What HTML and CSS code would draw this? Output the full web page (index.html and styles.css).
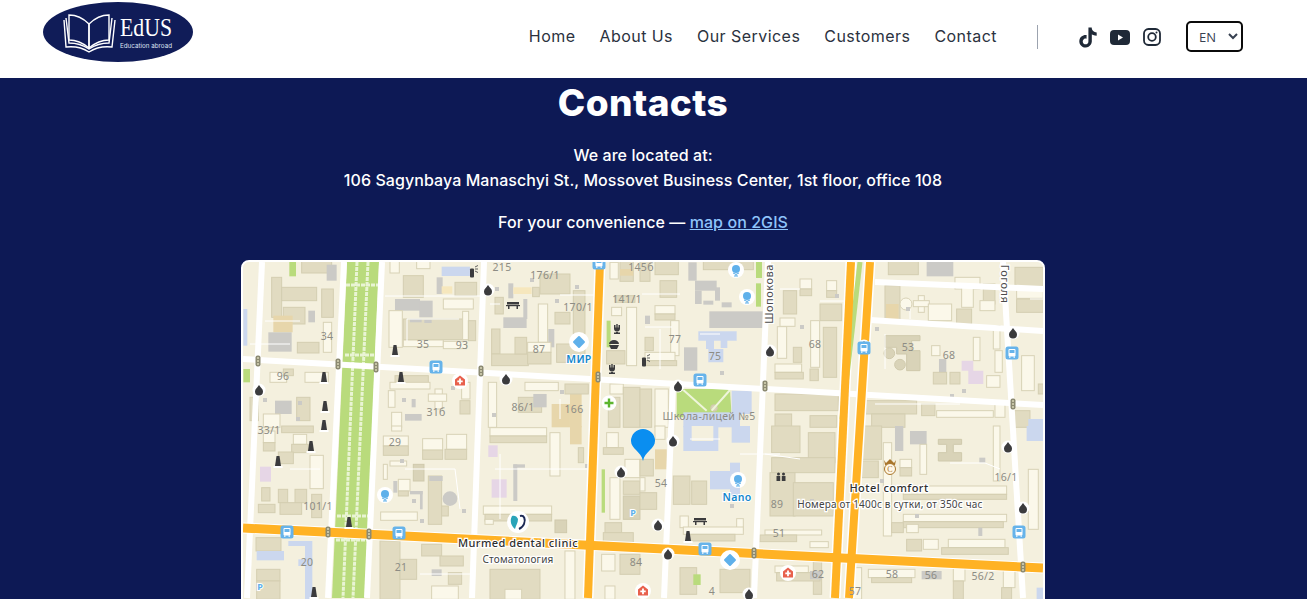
FILE: index.html
```html
<!DOCTYPE html>
<html lang="en">
<head>
<meta charset="utf-8">
<title>EdUS — Contacts</title>
<link rel="stylesheet" href="styles.css">
</head>
<body>
<header class="site-header">
  <a class="logo" href="#" aria-label="EdUS">
    <svg width="150" height="60" viewBox="0 0 150 60">
      <ellipse cx="75" cy="30" rx="75" ry="30" class="logo-bg"/>
      <g class="logo-book">
        <path d="M26 13 C33 13 40 16 46 22 L46 46 C40 41 33 38 26 38 Z"/>
        <path d="M66 13 C59 13 52 16 46 22 L46 46 C52 41 59 38 66 38 Z"/>
        <path d="M23 16 L26 41 C33 41 40 43 46 47 C52 43 59 41 66 41 L69 16"/>
        <path d="M21 18 L23 45 C32 44 40 46 46 50 C52 46 60 44 69 45 L72 18"/>
      </g>
      <text x="77" y="34" class="logo-name" textLength="52" lengthAdjust="spacingAndGlyphs">EdUS</text>
      <text x="77" y="46" class="logo-sub" textLength="52" lengthAdjust="spacingAndGlyphs">Education abroad</text>
    </svg>
  </a>
  <nav class="nav">
    <a href="#">Home</a>
    <a href="#">About Us</a>
    <a href="#">Our Services</a>
    <a href="#">Customers</a>
    <a href="#">Contact</a>
  </nav>
  <span class="divider"></span>
  <div class="socials">
    <svg class="ico-tt" width="20" height="21" viewBox="0 0 24 24"><path class="ico-fill" d="M12.525.02c1.31-.02 2.61-.01 3.91-.02.08 1.53.63 3.09 1.75 4.17 1.12 1.11 2.7 1.62 4.24 1.79v4.03c-1.44-.05-2.89-.35-4.2-.97-.57-.26-1.1-.59-1.62-.93-.01 2.92.01 5.84-.02 8.75-.08 1.4-.54 2.79-1.35 3.94-1.31 1.92-3.58 3.17-5.91 3.21-1.43.08-2.86-.31-4.08-1.03-2.02-1.19-3.44-3.37-3.65-5.71-.02-.5-.03-1-.01-1.49.18-1.9 1.12-3.72 2.58-4.96 1.66-1.44 3.98-2.13 6.15-1.72.02 1.48-.04 2.96-.04 4.44-.99-.32-2.15-.23-3.02.37-.63.41-1.11 1.04-1.36 1.75-.21.51-.15 1.07-.14 1.61.24 1.64 1.82 3.02 3.5 2.87 1.12-.01 2.19-.66 2.77-1.61.19-.33.4-.67.41-1.06.1-1.79.06-3.57.07-5.36.01-4.03-.01-8.05.02-12.07z"/></svg>
    <svg width="20" height="15" viewBox="0 0 20 15"><rect width="20" height="15" rx="4" class="ico-fill"/><path d="M8 4.6 L13 7.5 L8 10.4 Z" class="ico-white"/></svg>
    <svg class="ico-ig" width="18" height="18" viewBox="0 0 18 18"><rect x="1" y="1" width="16" height="16" rx="4.5" class="ico-line"/><circle cx="9" cy="9" r="3.8" class="ico-line"/><circle cx="13.5" cy="4.5" r="1" class="ico-fill"/></svg>
  </div>
  <select class="lang" aria-label="Language">
    <option>EN</option>
    <option>RU</option>
    <option>KG</option>
  </select>
</header>

<main class="contacts">
  <h1 class="title">Contacts</h1>
  <p class="address">We are located at:<br>106 Sagynbaya Manaschyi St., Mossovet Business Center, 1st floor, office 108</p>
  <p class="convenience">For your convenience — <a href="#">map on 2GIS</a></p>
  <div class="map">
    <svg class="map-svg" width="800" height="450" viewBox="243 263 800 450">
      <defs>
        <g id="drop"><circle r="6.500" class="m-white"/><path d="M0-5 C2-2 4-1 4 1.500 A4 4 0 0 1-4 1.500 C-4-1-2-2 0-5Z" class="m-dark"/></g>
        <g id="mon"><path d="M-1.500-6 H1.500 L3 4 H-3Z" class="m-dark"/><rect x="-4.500" y="4" width="9" height="2" class="m-white"/></g>
        <g id="bus"><rect x="-6.500" y="-6.500" width="13" height="13" rx="2.500" class="m-blue"/><rect x="-3.500" y="-4" width="7" height="7.500" rx="1" class="m-white"/><rect x="-2.500" y="-3" width="5" height="3" class="m-blue"/><rect x="-3" y="3.500" width="1.500" height="1.200" class="m-white"/><rect x="1.500" y="3.500" width="1.500" height="1.200" class="m-white"/></g>
        <g id="tl"><rect x="-2.500" y="-5.500" width="5" height="11" rx="2" class="m-tl"/><circle cy="-3" r="1" class="m-tl-dot"/><circle r="1" class="m-tl-dot"/><circle cy="3" r="1" class="m-tl-dot"/></g>
        <g id="globe"><circle r="8" class="m-white"/><circle cy="-1" r="4" class="m-lblue"/><path d="M-3 3 A4.500 4.500 0 0 0 3 3 M0 4 V6 M-2 6 H2" class="m-lblue-line"/></g>
        <g id="dia"><circle r="10" class="m-white"/><rect x="-4.500" y="-4.500" width="9" height="9" rx="1" transform="rotate(45)" class="m-lblue"/></g>
        <g id="hosp"><circle r="8" class="m-white"/><path d="M0-5.500 L5 -1.500 V4.500 H-5 V-1.500Z" class="m-red"/><path d="M-.9-2.500 H.9 V-.5 H2.700 V1.300 H.9 V3.200 H-.9 V1.300 H-2.700 V-.5 H-.9Z" class="m-white"/></g>
        <g id="fork"><path d="M-3-4 V-.5 A3 3 0 0 0 3-.5 V-4 H1.500 V-1.500 H.7 V-5 H-.7 V-1.500 H-1.500 V-4Z M-1 2 H1 V3.500 H3 V5 H-3 V3.500 H-1Z" class="m-dark"/></g>
        <g id="bench"><rect x="-6" y="-3" width="12" height="2.500" class="m-dark"/><rect x="-7" y="0" width="14" height="1.200" class="m-dark"/><rect x="-5" y="1" width="1.500" height="3" class="m-dark"/><rect x="3.500" y="1" width="1.500" height="3" class="m-dark"/></g>
        <g id="gas"><rect x="-2" y="-3.500" width="4" height="9" rx="1" class="m-dark"/><path d="M3-5 L6-6.500 M3-3 H6 M3-1 L6 .5" class="m-thin"/></g>
      </defs>

      <rect x="243" y="263" width="800" height="450" class="base"/>

      <!-- top-left -->
      <g transform="translate(240 255) scale(.3333)">
        <rect x="185" y="22" width="90" height="35" class="d"/><rect x="260" y="32" width="30" height="48" class="g"/><rect x="148" y="22" width="20" height="45" class="n"/>
        <rect x="95" y="70" width="30" height="120" class="d"/><rect x="125" y="100" width="105" height="40" class="d"/><rect x="130" y="160" width="65" height="50" class="d"/><rect x="205" y="170" width="20" height="35" class="g"/><rect x="100" y="185" width="58" height="50" class="o"/><rect x="85" y="235" width="70" height="58" class="g"/><rect x="172" y="265" width="65" height="32" class="d"/><rect x="245" y="105" width="35" height="85" class="d"/><rect x="250" y="205" width="25" height="90" class="l"/><rect x="10" y="165" width="12" height="110" class="u"/>
        <rect x="450" y="22" width="28" height="35" class="l"/><rect x="530" y="22" width="40" height="22" class="l"/><rect x="490" y="65" width="60" height="65" class="d"/><rect x="605" y="38" width="85" height="28" class="u"/><rect x="590" y="70" width="18" height="50" class="g"/><rect x="605" y="97" width="32" height="22" class="o2"/><rect x="645" y="85" width="65" height="40" class="d"/>
        <rect x="465" y="135" width="75" height="35" class="g"/><rect x="538" y="140" width="40" height="50" class="g"/><rect x="610" y="135" width="90" height="30" class="l"/><rect x="490" y="195" width="190" height="62" class="d"/><rect x="447" y="170" width="40" height="110" class="l"/><rect x="490" y="258" width="120" height="20" class="l"/><rect x="610" y="262" width="70" height="22" class="l"/><rect x="668" y="172" width="18" height="85" class="l"/><rect x="685" y="200" width="22" height="60" class="d"/><rect x="510" y="195" width="35" height="10" class="g"/><rect x="553" y="197" width="22" height="10" class="g"/>
        <rect x="765" y="130" width="25" height="50" class="d"/><rect x="805" y="88" width="15" height="45" class="g"/><rect x="820" y="100" width="55" height="20" class="o2"/><rect x="878" y="100" width="20" height="28" class="d"/><rect x="900" y="60" width="90" height="60" class="d"/><rect x="790" y="190" width="70" height="32" class="g"/><rect x="850" y="135" width="12" height="60" class="g"/><rect x="755" y="225" width="25" height="75" class="d"/><rect x="755" y="300" width="110" height="35" class="d"/><rect x="825" y="250" width="35" height="50" class="d"/><rect x="895" y="150" width="28" height="115" class="l"/><rect x="945" y="175" width="45" height="35" class="d"/><rect x="925" y="225" width="18" height="55" class="g"/><rect x="863" y="265" width="70" height="30" class="l"/><rect x="863" y="295" width="70" height="35" class="d"/><rect x="1000" y="110" width="35" height="130" class="d"/><rect x="950" y="270" width="85" height="55" class="d"/>
        <rect x="1115" y="160" width="30" height="25" class="l"/><rect x="1160" y="160" width="30" height="175" class="l"/><rect x="1100" y="200" width="12" height="80" class="n"/><rect x="1140" y="22" width="40" height="60" class="d"/><rect x="1140" y="45" width="40" height="20" class="o"/><rect x="1125" y="125" width="60" height="20" class="d"/><rect x="1110" y="25" width="25" height="50" class="l"/><rect x="1100" y="290" width="55" height="40" class="d"/>
        <rect x="10" y="345" width="20" height="40" class="n"/><rect x="90" y="355" width="50" height="30" class="l"/><rect x="130" y="345" width="30" height="20" class="d"/><rect x="195" y="355" width="70" height="30" class="l"/><rect x="105" y="440" width="50" height="40" class="g"/><rect x="70" y="480" width="50" height="40" class="l"/><rect x="170" y="430" width="40" height="70" class="d"/><rect x="30" y="430" width="25" height="70" class="d"/>
        <rect x="465" y="365" width="100" height="25" class="d"/><rect x="450" y="385" width="120" height="20" class="l"/><rect x="445" y="410" width="20" height="50" class="l"/><rect x="455" y="475" width="30" height="45" class="l"/><rect x="585" y="405" width="22" height="60" class="l"/><rect x="565" y="420" width="55" height="22" class="l"/><rect x="665" y="385" width="25" height="50" class="l"/><rect x="660" y="440" width="30" height="40" class="d"/><rect x="495" y="480" width="50" height="20" class="g"/><rect x="515" y="435" width="12" height="25" class="g"/>
        <rect x="745" y="385" width="25" height="135" class="l"/><rect x="855" y="385" width="100" height="25" class="l"/><rect x="835" y="430" width="70" height="45" class="d"/><rect x="880" y="420" width="40" height="40" class="g"/><rect x="935" y="450" width="55" height="70" class="o"/><rect x="990" y="405" width="35" height="115" class="o"/><rect x="975" y="390" width="70" height="30" class="d"/><rect x="1110" y="390" width="40" height="30" class="l"/><rect x="1150" y="400" width="50" height="120" class="d"/><rect x="1105" y="430" width="35" height="90" class="d"/>
      </g>

      <!-- top-right -->
      <g transform="translate(640 255) scale(.3333)">
        <rect x="0" y="22" width="30" height="60" class="d"/><rect x="45" y="22" width="70" height="40" class="d"/><rect x="60" y="80" width="50" height="50" class="d"/>
        <rect x="190" y="22" width="150" height="25" class="d"/><rect x="145" y="25" width="25" height="55" class="g"/><rect x="165" y="80" width="65" height="30" class="g"/><rect x="165" y="110" width="20" height="40" class="g"/><rect x="225" y="100" width="15" height="40" class="g"/><rect x="190" y="140" width="30" height="12" class="g"/><rect x="245" y="145" width="30" height="15" class="g"/><rect x="348" y="22" width="18" height="50" class="n"/><rect x="348" y="88" width="15" height="70" class="n"/>
        <rect x="45" y="155" width="60" height="25" class="l"/><rect x="45" y="180" width="60" height="18" class="d"/><rect x="92" y="200" width="25" height="105" class="l"/><rect x="15" y="185" width="15" height="25" class="g"/><rect x="208" y="172" width="160" height="50" class="g"/><rect x="15" y="250" width="25" height="40" class="d"/><rect x="15" y="295" width="90" height="25" class="l"/><rect x="15" y="320" width="95" height="15" class="d"/>
        <path d="M175 232 H290 V260 H262 V282 H242 V260 H222 V285 H250 V325 H205 V285 H198 V260 H175Z" class="u"/><rect x="132" y="280" width="40" height="70" class="g"/>
        <rect x="480" y="75" width="35" height="30" class="l"/><rect x="480" y="105" width="35" height="20" class="d"/><rect x="560" y="80" width="30" height="30" class="l"/><rect x="560" y="110" width="30" height="20" class="d"/><rect x="430" y="110" width="40" height="70" class="d"/><rect x="540" y="150" width="65" height="50" class="d"/><rect x="420" y="192" width="45" height="25" class="l"/><rect x="412" y="218" width="28" height="95" class="l"/><rect x="405" y="330" width="80" height="25" class="l"/><rect x="405" y="355" width="85" height="20" class="d"/><rect x="460" y="280" width="25" height="45" class="d"/><rect x="512" y="200" width="27" height="140" class="l"/><rect x="510" y="345" width="25" height="35" class="d"/><rect x="550" y="220" width="40" height="150" class="d"/>
        <rect x="745" y="22" width="90" height="40" class="d"/><rect x="860" y="22" width="80" height="45" class="g"/><rect x="735" y="95" width="45" height="110" class="d"/><rect x="738" y="150" width="38" height="45" class="o"/><circle cx="798" cy="150" r="18" class="l"/><rect x="835" y="125" width="18" height="50" class="l"/><rect x="820" y="140" width="48" height="18" class="l"/><rect x="865" y="150" width="70" height="50" class="l"/><rect x="945" y="70" width="75" height="35" class="l"/><rect x="965" y="100" width="35" height="60" class="l"/><rect x="950" y="165" width="45" height="45" class="d"/><rect x="1030" y="90" width="35" height="60" class="d"/><rect x="1020" y="140" width="45" height="30" class="l"/><rect x="1125" y="40" width="85" height="60" class="d"/><rect x="1130" y="105" width="80" height="28" class="l"/><rect x="1130" y="135" width="80" height="40" class="d"/>
        <path d="M735 245 H840 V260 H815 V290 H840 V350 H800 V300 H770 V280 H735Z" class="dk"/><circle cx="748" cy="298" r="16" class="dk"/><circle cx="780" cy="332" r="16" class="dk"/>
        <rect x="875" y="275" width="25" height="30" class="l"/><rect x="897" y="315" width="22" height="40" class="g"/><rect x="880" y="355" width="40" height="35" class="d"/><rect x="930" y="355" width="30" height="35" class="d"/><rect x="1000" y="250" width="20" height="70" class="l"/><rect x="1060" y="215" width="20" height="70" class="l"/><rect x="1065" y="290" width="22" height="65" class="l"/><rect x="1040" y="365" width="40" height="35" class="l"/><path d="M965 320 H1000 V350 H1030 V390 H985 V350 H965Z" class="p"/><rect x="1145" y="305" width="38" height="105" class="l"/><rect x="1195" y="390" width="15" height="30" class="d"/>
        <rect x="405" y="420" width="190" height="50" class="d"/><rect x="405" y="480" width="50" height="40" class="d"/><rect x="510" y="485" width="80" height="35" class="d"/><rect x="675" y="440" width="155" height="40" class="d"/><rect x="695" y="480" width="100" height="40" class="d"/><rect x="845" y="450" width="40" height="35" class="d"/><rect x="890" y="470" width="170" height="20" class="l"/><rect x="1065" y="450" width="30" height="40" class="l"/><rect x="1120" y="470" width="50" height="50" class="d"/><rect x="1165" y="495" width="45" height="25" class="u"/>
        <path d="M110 405 H270 L275 490 H110Z" class="n"/><circle cx="222" cy="462" r="10" class="dk"/><rect x="130" y="475" width="170" height="45" class="u"/><rect x="275" y="410" width="60" height="70" class="u"/>
        <path d="M130 408 L200 470 M270 408 L215 470" class="lane"/>
        <rect x="45" y="405" width="40" height="115" class="l"/><rect x="0" y="405" width="35" height="115" class="d"/>
      </g>

      <!-- bottom-left -->
      <g transform="translate(240 427) scale(.3333)">
        <rect x="125" y="0" width="95" height="20" class="d"/><rect x="70" y="15" width="35" height="35" class="l"/><rect x="70" y="50" width="35" height="25" class="d"/><rect x="160" y="25" width="40" height="30" class="l"/><rect x="155" y="55" width="50" height="25" class="d"/><rect x="210" y="88" width="40" height="100" class="l"/><rect x="60" y="122" width="33" height="45" class="p"/><rect x="65" y="185" width="25" height="40" class="d"/><rect x="115" y="190" width="28" height="40" class="d"/><rect x="165" y="190" width="35" height="40" class="d"/><rect x="120" y="230" width="65" height="35" class="d"/><rect x="215" y="205" width="30" height="70" class="d"/><rect x="55" y="235" width="50" height="25" class="d"/><rect x="115" y="78" width="45" height="35" class="d"/>
        <rect x="455" y="0" width="30" height="15" class="l"/><rect x="430" y="30" width="75" height="30" class="l"/><rect x="430" y="60" width="75" height="28" class="d"/><rect x="548" y="38" width="60" height="35" class="l"/><rect x="548" y="72" width="60" height="28" class="d"/><rect x="620" y="25" width="60" height="45" class="l"/><rect x="615" y="70" width="65" height="30" class="d"/>
        <rect x="750" y="5" width="170" height="25" class="l"/><rect x="750" y="30" width="170" height="20" class="d"/><rect x="745" y="58" width="28" height="35" class="p"/><rect x="930" y="20" width="30" height="130" class="l"/><rect x="1015" y="65" width="16" height="45" class="d"/><rect x="990" y="0" width="35" height="55" class="o"/>
        <rect x="820" y="115" width="12" height="110" class="g"/><rect x="820" y="115" width="35" height="10" class="g"/><rect x="755" y="160" width="45" height="55" class="p"/>
        <rect x="450" y="105" width="50" height="15" class="l"/><rect x="430" y="115" width="12" height="45" class="l"/><rect x="460" y="165" width="12" height="35" class="g"/><rect x="475" y="160" width="35" height="35" class="l"/><rect x="475" y="195" width="30" height="15" class="d"/><rect x="510" y="195" width="38" height="10" class="g"/><rect x="540" y="195" width="8" height="55" class="g"/><rect x="422" y="258" width="110" height="25" class="l"/><rect x="520" y="115" width="32" height="50" class="dk"/>
        <rect x="565" y="150" width="40" height="145" class="d"/><rect x="605" y="240" width="20" height="30" class="d"/><rect x="568" y="150" width="40" height="15" class="g"/><circle cx="630" cy="218" r="22" class="g"/>
        <rect x="730" y="240" width="205" height="25" class="l"/><rect x="735" y="265" width="200" height="20" class="d"/><rect x="735" y="280" width="25" height="15" class="l"/><rect x="945" y="282" width="35" height="38" class="dk"/>
        <rect x="48" y="335" width="75" height="40" class="d"/><rect x="50" y="375" width="82" height="28" class="u"/><rect x="145" y="345" width="70" height="15" class="u"/><rect x="195" y="345" width="22" height="175" class="u"/><rect x="175" y="400" width="40" height="20" class="u"/><rect x="50" y="430" width="70" height="35" class="d"/><rect x="50" y="465" width="70" height="55" class="d"/>
        <rect x="420" y="345" width="60" height="175" class="d"/><rect x="545" y="355" width="60" height="35" class="d"/><rect x="480" y="400" width="50" height="60" class="d"/><rect x="600" y="390" width="70" height="30" class="d"/><rect x="575" y="480" width="80" height="40" class="l"/><rect x="625" y="440" width="40" height="35" class="d"/><rect x="575" y="430" width="30" height="20" class="g"/><rect x="975" y="375" width="30" height="145" class="l"/><rect x="750" y="430" width="150" height="90" class="d"/><rect x="795" y="490" width="50" height="30" class="l"/>
        <rect x="1100" y="20" width="35" height="45" class="l"/><rect x="1090" y="65" width="60" height="20" class="d"/><rect x="1155" y="100" width="45" height="55" class="l"/><rect x="1110" y="155" width="30" height="125" class="l"/><rect x="1150" y="165" width="50" height="40" class="d"/><rect x="1085" y="130" width="10" height="130" class="n"/><rect x="1150" y="210" width="50" height="70" class="dk"/><rect x="1095" y="290" width="50" height="30" class="d"/><rect x="1090" y="320" width="90" height="30" class="d"/><rect x="1095" y="480" width="30" height="40" class="l"/><rect x="1140" y="385" width="60" height="60" class="d"/><rect x="1085" y="385" width="40" height="50" class="l"/>
      </g>

      <!-- bottom-right -->
      <g transform="translate(640 427) scale(.3333)">
        <rect x="130" y="0" width="105" height="75" class="u"/><rect x="155" y="0" width="65" height="45" class="base"/><rect x="275" y="0" width="55" height="50" class="u"/><rect x="45" y="0" width="30" height="40" class="l"/><rect x="45" y="70" width="35" height="60" class="o"/><rect x="0" y="155" width="15" height="40" class="l"/><rect x="0" y="100" width="40" height="50" class="d"/><rect x="0" y="200" width="50" height="50" class="d"/><rect x="100" y="150" width="50" height="85" class="d"/><rect x="155" y="165" width="45" height="70" class="d"/><rect x="210" y="135" width="60" height="55" class="u"/><rect x="270" y="110" width="30" height="100" class="u"/>
        <rect x="395" y="0" width="85" height="80" class="d"/><rect x="505" y="20" width="80" height="90" class="d"/><rect x="395" y="95" width="190" height="45" class="d"/><rect x="390" y="140" width="75" height="130" class="d"/><rect x="460" y="170" width="120" height="100" class="d"/>
        <rect x="660" y="0" width="65" height="100" class="d"/><rect x="655" y="105" width="60" height="50" class="d"/><rect x="765" y="0" width="25" height="75" class="g"/><rect x="810" y="15" width="50" height="40" class="g"/><rect x="840" y="55" width="20" height="90" class="l"/><rect x="730" y="50" width="25" height="280" class="l"/><rect x="780" y="100" width="35" height="25" class="l"/><rect x="780" y="125" width="35" height="25" class="d"/><path d="M895 40 H965 V55 H940 V80 H965 V105 H895 V80 H920 V55 H895Z" class="dk"/><rect x="1018" y="95" width="18" height="15" class="g"/><rect x="1060" y="0" width="20" height="165" class="l"/><rect x="1160" y="0" width="50" height="45" class="u"/><rect x="1165" y="130" width="30" height="180" class="l"/>
        <rect x="790" y="180" width="310" height="25" class="l"/><rect x="790" y="205" width="310" height="15" class="d"/><rect x="790" y="265" width="310" height="22" class="l"/><rect x="790" y="287" width="300" height="18" class="d"/><rect x="800" y="295" width="35" height="25" class="l"/><rect x="755" y="290" width="35" height="30" class="d"/><rect x="800" y="340" width="45" height="35" class="d"/><rect x="850" y="340" width="45" height="30" class="l"/><rect x="925" y="340" width="170" height="25" class="l"/><rect x="905" y="365" width="200" height="20" class="d"/><rect x="1015" y="305" width="12" height="25" class="g"/>
        <rect x="120" y="270" width="25" height="35" class="l"/><rect x="290" y="278" width="20" height="35" class="l"/><rect x="130" y="303" width="180" height="22" class="l"/><rect x="145" y="325" width="140" height="20" class="d"/><rect x="375" y="312" width="170" height="15" class="l"/><rect x="360" y="327" width="110" height="20" class="d"/><rect x="510" y="347" width="55" height="18" class="l"/>
        <rect x="120" y="425" width="50" height="80" class="d"/><rect x="160" y="445" width="22" height="32" class="n"/><rect x="240" y="430" width="90" height="70" class="d"/><rect x="520" y="405" width="25" height="100" class="d"/><rect x="405" y="420" width="100" height="20" class="l"/><rect x="410" y="440" width="130" height="25" class="d"/><rect x="510" y="435" width="35" height="25" class="g"/><rect x="635" y="425" width="30" height="95" class="l"/><rect x="685" y="430" width="140" height="25" class="l"/><rect x="695" y="455" width="120" height="15" class="d"/><rect x="845" y="435" width="60" height="25" class="g"/><rect x="940" y="425" width="35" height="40" class="l"/><rect x="940" y="465" width="30" height="55" class="d"/><rect x="1090" y="425" width="35" height="60" class="l"/><rect x="1085" y="485" width="30" height="35" class="d"/><rect x="1190" y="485" width="20" height="35" class="u"/>
      </g>

      <!-- footpaths and small details -->
      <path d="M265 322 H300 M250 345 H290 M385 297 H483 M407 320 H459 M407 320 V342 M490 305 H500 M600 296 H560 M642 295 H680 M645 328 H672 M700 335 H720 M780 290 H800 M820 302 H850 M885 335 V370 M740 455 H780 M690 440 H720 M765 455 L800 460 M950 464 H985 L1000 470 M405 470 H455 L460 510 M495 470 H590 M420 575 H470 M660 330 V370 M910 310 V320 M875 405 H960 M1030 300 H1043 M350 530 H330 M500 455 V520 M290 470 H320 M560 400 V420" class="footpath"/>
      <path d="M495 288h4v4h-4z M530 279h4v4h-4z M263 399h4v4h-4z M298 402h4v4h-4z M296 418h4v4h-4z M451 387h4v4h-4z M402 399h4v4h-4z M492 414h4v4h-4z M560 391h4v4h-4z M555 300h4v4h-4z M575 286h4v4h-4z M720 372h4v4h-4z M800 326h4v4h-4z M835 295h4v4h-4z M875 328h4v4h-4z M950 395h4v4h-4z M962 390h4v4h-4z M906 308h4v4h-4z M400 460h4v4h-4z M412 500h4v4h-4z M420 520h4v4h-4z M462 510h4v4h-4z M585 465h4v4h-4z M730 505h4v4h-4z M810 500h4v4h-4z M880 480h4v4h-4z M915 515h4v4h-4z" class="g"/>

      <!-- boulevard -->
      <path d="M347 263 H379 L365 599 H332Z" class="n"/>
      <path d="M357 263 L343 599 M368 263 L353 599 M346 286 H378 M345 356 H377 M337 517 H368 M336 541 H367" class="lattice"/>

      <!-- roads -->
      <g class="road">
        <path d="M262 263 L247 599"/><path d="M344 263 L328 599"/><path d="M382 263 L367 599"/><path d="M484 263 L472 599"/><path d="M768 263 L754 599"/><path d="M673 385 L664 599"/><path d="M1003 263 L1023 599"/>
        <path d="M243 360 L1043 406"/><path d="M875 283 L1043 290"/><path d="M870 321 L1043 332"/>
      </g>
      <g class="casing">
        <path d="M600 263 L588 599"/><path d="M243 529 L1043 569"/><path d="M851 263 L835 599"/><path d="M870 263 L849 599"/>
      </g>
      <path d="M860 263 L842 420" class="green-strip"/>
      <g class="main">
        <path d="M243 529 L1043 569" class="main-h"/><path d="M600 263 L588 599"/><path d="M851 263 L835 599"/><path d="M870 263 L849 599"/>
      </g>

      <!-- markers -->
      <use href="#drop" x="488" y="291"/><use href="#drop" x="506" y="380"/><use href="#drop" x="259" y="391"/><use href="#drop" x="770" y="352"/><use href="#drop" x="678" y="387"/><use href="#drop" x="1013" y="334"/><use href="#drop" x="621" y="473"/><use href="#drop" x="673" y="442"/><use href="#drop" x="1008" y="448"/><use href="#drop" x="1023" y="509"/><use href="#drop" x="658" y="526"/><use href="#drop" x="668" y="555"/><use href="#drop" x="749" y="595"/><use href="#drop" x="864" y="347"/>
      <use href="#mon" x="395" y="352"/><use href="#mon" x="324" y="379"/><use href="#mon" x="401" y="379"/><use href="#mon" x="325" y="408"/><use href="#mon" x="324" y="427"/><use href="#mon" x="311" y="448"/><use href="#mon" x="278" y="463"/><use href="#mon" x="349" y="524"/><use href="#mon" x="314" y="594"/><use href="#mon" x="688" y="538"/>
      <use href="#bus" x="436" y="368"/><use href="#bus" x="599" y="264"/><use href="#bus" x="864" y="349"/><use href="#bus" x="1012" y="354"/><use href="#bus" x="700" y="381"/><use href="#bus" x="287" y="533"/><use href="#bus" x="399" y="534"/><use href="#bus" x="1019" y="533"/><use href="#bus" x="705" y="550"/>
      <use href="#tl" x="258" y="362"/><use href="#tl" x="338" y="365"/><use href="#tl" x="376" y="368"/><use href="#tl" x="481" y="372"/><use href="#tl" x="598" y="378"/><use href="#tl" x="765" y="387"/><use href="#tl" x="1013" y="405"/><use href="#tl" x="328" y="533"/><use href="#tl" x="369" y="535"/><use href="#tl" x="754" y="554"/><use href="#tl" x="1023" y="568"/>
      <use href="#globe" x="736" y="271"/><use href="#globe" x="747" y="298"/><use href="#globe" x="385" y="496"/><use href="#globe" x="738" y="481"/>
      <use href="#dia" x="579" y="343"/><use href="#dia" x="730" y="561"/>
      <use href="#hosp" x="460" y="382"/><use href="#hosp" x="788" y="574"/><use href="#hosp" x="643" y="592"/>
      <use href="#fork" x="617" y="330"/><use href="#fork" x="612" y="370"/><use href="#bench" x="513" y="306"/><use href="#bench" x="700" y="522"/><use href="#gas" x="472" y="273"/><use href="#gas" x="644" y="362"/>

      <g transform="translate(614 346)"><path d="M-5 0 H5 L3 4 H-3Z M-5-1 A5 4 0 0 1 5-1Z" class="m-dark"/></g>
      <circle cx="609" cy="404" r="7.500" class="m-white"/><path d="M607.800 399.500 H610.200 V402.800 H613.500 V405.200 H610.200 V408.500 H607.800 V405.200 H604.500 V402.800 H607.800Z" class="m-green"/>
      <g transform="translate(781 478)"><circle cx="-2.500" cy="-3" r="1.500" class="m-dark"/><circle cx="2.500" cy="-3" r="1.500" class="m-dark"/><path d="M-4.500-1 H-.8 V4 H-4.500Z M.8-1 H4.500 V4 H.8Z" class="m-dark"/></g>
      <text x="260" y="591" class="poi-p">P</text><text x="633" y="517" class="poi-p">P</text>

      <!-- dental logo -->
      <circle cx="518" cy="523" r="11" class="m-white"/>
      <path d="M512 517 C509 522 512 528 515 530 C516 526 518 524 518 520 C517 517 514 516 512 517Z" class="dent-a"/>
      <path d="M520 517 C524 516 526 520 524 525 C523 528 521 529 519 530" class="dent-b"/>

      <!-- hotel -->
      <path d="M884 461 L886 464 L890 460 L894 464 L896 461 L895 466 H885Z" class="hotel-crown"/>
      <circle cx="890" cy="470" r="5.500" class="hotel-ring"/>
      <text x="890" y="473" class="hotel-c">C</text>

      <!-- pin -->
      <path d="M631 442 A12 12 0 0 1 655 442 C655 450 645 452 643 462 C641 452 631 450 631 442Z" class="pin"/>

      <!-- labels -->
      <g class="num">
        <text x="502" y="272">215</text><text x="545" y="280">176/1</text><text x="578" y="312">170/1</text><text x="627" y="304">141/1</text><text x="327" y="341">34</text><text x="423" y="349">35</text><text x="462" y="350">93</text><text x="539" y="354">87</text><text x="283" y="381">96</text><text x="523" y="412">86/1</text><text x="574" y="414">166</text><text x="436" y="417">31б</text><text x="269" y="435">33/1</text><text x="395" y="447">29</text><text x="318" y="511">101/1</text><text x="307" y="567">20</text><text x="401" y="572">21</text><text x="675" y="344">77</text><text x="715" y="361">75</text><text x="815" y="349">68</text><text x="908" y="352">53</text><text x="949" y="360">68</text><text x="641" y="272">145б</text><text x="661" y="488">54</text><text x="777" y="509">89</text><text x="1006" y="482">16/1</text><text x="779" y="538">51</text><text x="818" y="579">62</text><text x="892" y="579">58</text><text x="931" y="580">56</text><text x="983" y="581">56/2</text><text x="855" y="596">57</text><text x="636" y="567">84</text><text x="712" y="596">4</text>
        <text x="709" y="421">Школа-лицей №5</text>
      </g>
      <text transform="translate(773 295) rotate(-90)" class="street">Шопокова</text>
      <text transform="translate(1001 285) rotate(90)" class="street">Гоголя</text>
      <text x="579" y="364" class="brand">МИР</text>
      <text x="737" y="502" class="brand">Nano</text>
      <text x="518" y="548" class="poi">Murmed dental clinic</text>
      <text x="518" y="564" class="poi-sub">Стоматология</text>
      <text x="889" y="493" class="poi">Hotel comfort</text>
      <text x="890" y="509" class="poi-sub">Номера от 1400с в сутки, от 350с час</text>
    </svg>
  </div>
</main>
</body>
</html>
```

FILE: styles.css
```css
* { box-sizing: border-box; }
html, body { margin: 0; height: 100%; overflow: hidden; }
body { font-family: Inter, "Noto Sans", sans-serif; background: #0d1955; color: #fff; }
a { color: inherit; }

.site-header {
  height: 78px;
  background: #fff;
  display: flex;
  align-items: center;
  padding: 0 64px 0 43px;
}
.logo { display: block; height: 60px; margin-top: -14px; }
.logo-bg { fill: #101c58; }
.logo-book path { fill: none; stroke: #fff; stroke-width: 1.4; }
.logo-name { font: 26px "Liberation Serif", serif; fill: #fff; }
.logo-sub { font: 6.500px Inter, sans-serif; fill: #dfe3f2; }

.nav { display: flex; gap: 24px; margin-left: auto; margin-top: -6px; }
.nav a { color: #2b3240; text-decoration: none; font-size: 16px; letter-spacing: .45px; white-space: nowrap; }
.divider { width: 1px; height: 24px; background: #9ca3af; margin: -5px 0 0 40px; }
.socials { display: flex; align-items: center; gap: 12px; margin: -4px 0 0 40px; }
.ico-ig { margin-left: 1px; }
.ico-fill { fill: #1f2937; }
.ico-white { fill: #fff; }
.ico-line { fill: none; stroke: #1f2937; stroke-width: 1.800; }
.lang {
  width: 57px;
  height: 31px;
  margin: -5px 0 0 25px;
  padding: 0 0 0 7px;
  border: 2px solid #0b0b0b;
  border-radius: 5px;
  background: #fff;
  color: #374151;
  font: 13px "Open Sans", sans-serif;
}

.contacts {
  display: flex;
  flex-direction: column;
  align-items: center;
  padding-right: 21px;
  text-align: center;
}
.title { margin: 3px 0 0; font-size: 37px; line-height: 44px; font-weight: 800; letter-spacing: .4px; }
.address { margin: 18px 0 0; font-size: 16px; line-height: 25px; font-weight: 500; letter-spacing: .07px; }
.convenience { margin: 17px 0 0; font-size: 16px; line-height: 25px; font-weight: 500; letter-spacing: .07px; }
.convenience a { color: #8fc4fb; }
.map {
  margin-top: 25px;
  width: 804px;
  height: 450px;
  border: 2px solid #fff;
  border-radius: 8px;
  overflow: hidden;
  background: #f3efdd;
  flex: none;
}
.map-svg { display: block; }

.base { fill: #f4f0de; }
.d { fill: #e1dbc1; stroke: #d4ceb1; stroke-width: 3; }
.dk { fill: #d9d3b8; stroke: #cfc9ac; stroke-width: 3; }
.l { fill: #fbf8ea; stroke: #d8d2b6; stroke-width: 3; }
.g { fill: #cbcac6; }
.u { fill: #cbd7ee; }
.p { fill: #e6d6e6; }
.o { fill: #e7d6ab; }
.o2 { fill: #f6e7bd; }
.n { fill: #b9db7c; }
.lane { fill: none; stroke: #eef5da; stroke-width: 6; }
.lattice { fill: none; stroke: #e9f4d4; stroke-width: 3; stroke-dasharray: 4 1; }
.footpath { fill: none; stroke: #fff; stroke-width: 1; }
.road path { fill: none; stroke: #fff; stroke-width: 6; }
.casing path { fill: none; stroke: #fff; stroke-width: 11; }
.main path { fill: none; stroke: #ffb224; stroke-width: 8; }
.main .main-h { stroke-width: 9; }
.green-strip { fill: none; stroke: #b9db7c; stroke-width: 5; }

.m-white { fill: #fff; }
.m-dark { fill: #3b3b3d; }
.m-thin { fill: none; stroke: #3b3b3d; stroke-width: .8; }
.m-blue { fill: #66b3ea; }
.m-lblue { fill: #5fb0ea; }
.m-lblue-line { fill: none; stroke: #5fb0ea; stroke-width: 1; }
.m-tl { fill: #8c8a72; }
.m-tl-dot { fill: #d9d6b8; }
.m-red { fill: #e8604c; }
.m-green { fill: #5db52e; }
.dent-a { fill: #2aa4b8; }
.dent-b { fill: none; stroke: #1d2a55; stroke-width: 2; }
.hotel-crown { fill: #a9762c; }
.hotel-ring { fill: #fff7e6; stroke: #a9762c; stroke-width: 1; }
.hotel-c { font: 8px "Liberation Serif", serif; fill: #a9762c; text-anchor: middle; }
.pin { fill: #0a8ef0; }
.poi-p { font: 700 9px "Noto Sans", sans-serif; fill: #5fb0ea; text-anchor: middle; paint-order: stroke; stroke: #fff; stroke-width: 2; }

.num text { font: 10.500px "Noto Sans", sans-serif; fill: #8d8c84; text-anchor: middle; letter-spacing: .3px; }
.street { font: 11px "Noto Sans", sans-serif; fill: #4b4b4b; text-anchor: middle; letter-spacing: .5px; paint-order: stroke; stroke: #fff; stroke-width: 2.500; }
.brand { font: 600 10.500px "Noto Sans", sans-serif; fill: #1387cd; text-anchor: middle; letter-spacing: .3px; paint-order: stroke; stroke: #fff; stroke-width: 2; }
.poi { font: 500 11px "Noto Sans", sans-serif; fill: #2e2e2e; text-anchor: middle; letter-spacing: .45px; paint-order: stroke; stroke: #fff; stroke-width: 2.500; }
.poi-sub { font: 10px "Noto Sans", sans-serif; fill: #444; text-anchor: middle; letter-spacing: .2px; paint-order: stroke; stroke: #fff; stroke-width: 2.500; }
```
